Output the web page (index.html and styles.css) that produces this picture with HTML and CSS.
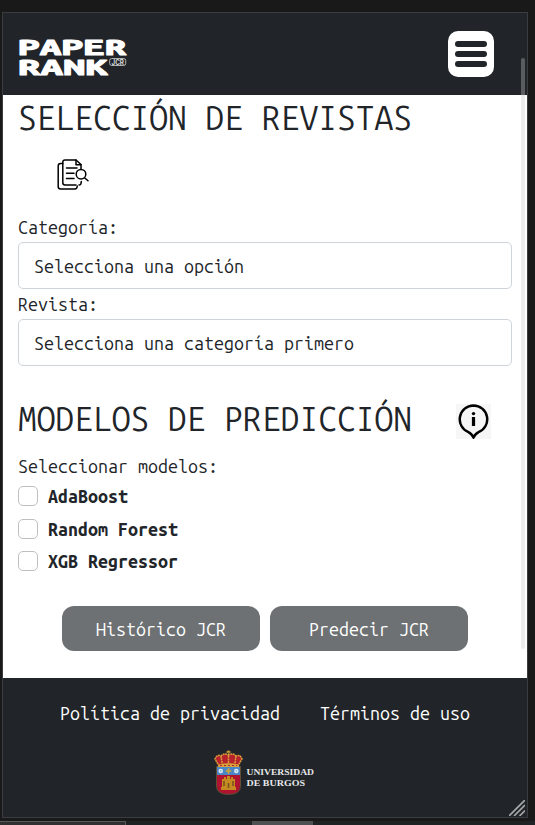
FILE: index.html
```html
<!DOCTYPE html>
<html lang="es">
<head>
<meta charset="utf-8">
<title>PaperRank JCR</title>
<link rel="stylesheet" href="styles.css">
</head>
<body>
<div class="device">
  <header class="header">
    <svg class="logo" viewBox="0 0 110 42">
      <g class="logo-type">
        <text x="0" y="17.8" textLength="108.5" lengthAdjust="spacingAndGlyphs">PAPER</text>
        <text x="0" y="38" textLength="90" lengthAdjust="spacingAndGlyphs">RANK</text>
      </g>
      <rect x="91.7" y="21.5" width="16" height="7" rx="2" fill="none" stroke="#d5d7d8" stroke-width=".8"/>
      <text class="logo-jcr" x="93.5" y="27.5" textLength="12.5" lengthAdjust="spacingAndGlyphs">JCR</text>
    </svg>
    <button class="menu" aria-label="Menú"><i></i><i></i><i></i></button>
  </header>
  <main class="main">
    <h1 class="title">SELECCIÓN DE REVISTAS</h1>
    <svg class="docs" viewBox="0 0 34 34" fill="none" stroke="#000" stroke-width="1.5" stroke-linejoin="round" stroke-linecap="round">
      <path d="M24 11V6.5L19 2H8Q5.8 2 5.8 4.2V24.8Q5.8 27 8 27H19M22 27Q24.3 27 24.3 23.5"/>
      <path d="M19 2V6.8H24M5.8 5.5H3.6Q1.2 5.5 1.2 8V28.5Q1.2 31 3.6 31H18Q20 31 20.3 28"/>
      <path d="M9.5 10H20M9.5 15.3H17M9.5 20.5H17"/>
      <circle cx="24" cy="16.2" r="4.8"/><path d="M27.5 19.7L31 22.8"/>
    </svg>
    <label class="label">Categoría:</label>
    <div class="select">Selecciona una opción</div>
    <label class="label">Revista:</label>
    <div class="select">Selecciona una categoría primero</div>
    <div class="models-head">
      <h1 class="title">MODELOS DE PREDICCIÓN</h1>
      <svg class="info" viewBox="0 0 35 35">
        <path d="M17.5 1.4A13.9 13.9 0 0 1 22.5 28.2Q20 29 17.5 33.4Q15 29 12.5 28.2A13.9 13.9 0 0 1 17.5 1.4Z" fill="none" stroke="#000" stroke-width="2.5"/>
        <circle cx="17.5" cy="9.6" r="1.7"/><path d="M17.5 13V22" stroke="#000" stroke-width="3.2"/>
      </svg>
    </div>
    <p class="label models-label">Seleccionar modelos:</p>
    <div class="checks">
      <label class="check"><span class="box"></span>AdaBoost</label>
      <label class="check"><span class="box"></span>Random Forest</label>
      <label class="check"><span class="box"></span>XGB Regressor</label>
    </div>
    <div class="actions">
      <button class="btn">Histórico JCR</button>
      <button class="btn">Predecir JCR</button>
    </div>
  </main>
  <footer class="footer">
    <nav class="links"><a>Política de privacidad</a><a>Términos de uso</a></nav>
    <svg class="ubu" viewBox="0 0 104 46">
      <path d="M4 17H27V36Q27 44 15.5 44Q4 44 4 36Z" fill="#b01330"/>
      <path d="M4 17H27V25H4Z" fill="#4a86c5"/>
      <path d="M3.5 16.5H27.5V36Q27.5 44.4 15.5 44.4Q3.5 44.4 3.5 36Z" fill="none" stroke="#8e6b3a" stroke-width=".6"/>
      <path d="M5 16L2 8Q4 4 8 6Q11 2.5 15.5 5Q20 2.5 23 6Q27 4 29 8L26 16Q15.5 13.5 5 16Z" fill="#b5222b"/>
      <path d="M5 14.5Q15.5 12 26 14.5V17H5Z" fill="#d9a13a"/>
      <path d="M5 14L2 9Q4 4 8 6Q11 2.5 15.5 5Q20 2.5 23 6Q27 4 29 9L26 14M9 13L8 6M22 13L23 6M15.5 13V0M13.5 2H17.5" fill="none" stroke="#d9a13a" stroke-width="1.5" stroke-dasharray="2 .6"/>
      <path d="M7 15.5H24" stroke="#a52730" stroke-dasharray="2 2"/>
      <circle cx="7.7" cy="21" r="2.3" fill="#dce8f2"/><circle cx="23.3" cy="21" r="2.3" fill="#dce8f2"/>
      <circle cx="7.7" cy="21" r=".8" fill="#7aa4c8"/><circle cx="23.3" cy="21" r=".8" fill="#7aa4c8"/>
      <path d="M15.5 18.2V23.8M12.7 21H18.3" stroke="#cfa636" stroke-width="1.7"/>
      <path d="M8 40V37H9V29H11V27H13V29H14V26H17V29H18V27H20V29H22V37H23V40Z" fill="#c58a20"/>
      <path d="M15.5 33V38M11 31V36M20 31V36" stroke="#76501f" stroke-width="1.5"/>
      <text x="33.5" y="25" textLength="67.5" lengthAdjust="spacingAndGlyphs">UNIVERSIDAD</text>
      <text x="33.5" y="36.3" textLength="58.5" lengthAdjust="spacingAndGlyphs">DE BURGOS</text>
    </svg>
  </footer>
  <div class="scrollbar"></div>
  <svg class="grip" viewBox="0 0 16 16" stroke="#a3a7a5" stroke-width="1.7"><path d="M0 16L16 0M5 16L16 5M10.5 16L16 10.5"/></svg>
</div>
<div class="dock"><span class="dock-tab"></span><span class="dock-thumb"></span></div>
</body>
</html>
```
FILE: styles.css
```css
* { box-sizing: border-box; }
body {
  margin: 0;
  height: 825px;
  padding: 12px 0 0 2px;
  overflow: hidden;
  background: #19191a;
  color: #212529;
  font: 17.87px/22px "Ubuntu Mono", "DejaVu Sans Mono", monospace;
  display: flex;
  flex-direction: column;
}
.device {
  position: relative;
  width: 526px;
  height: 806px;
  border: 1px solid #3b3c40;
  background: #fff;
  display: flex;
  flex-direction: column;
}
.header {
  height: 82px;
  background: #212529;
  display: flex;
  align-items: center;
  justify-content: space-between;
  padding: 0 33px 0 15px;
}
.logo { width: 110px; height: 42px; margin-top: 7px; overflow: visible; }
.logo-type {
  font: 700 22.5px "Ubuntu Mono", "DejaVu Sans Mono", monospace;
  fill: #fff;
  stroke: #fff;
  stroke-width: 1;
  stroke-linejoin: round;
}
.logo-jcr { font: 700 7px Inter, sans-serif; fill: #d5d7d8; }
.menu {
  width: 46px;
  height: 46px;
  padding: 0 7px;
  border: 0;
  border-radius: 10px;
  background: #fff;
  display: flex;
  flex-direction: column;
  justify-content: center;
  gap: 4px;
}
.menu i { height: 6px; border-radius: 3px; background: #212529; }
.main {
  height: 583px;
  padding: 0 15px;
  display: flex;
  flex-direction: column;
}
.title {
  margin: 0;
  font-size: 33.5px;
  font-weight: 400;
  line-height: 46px;
  white-space: nowrap;
}
.docs { width: 34px; height: 34px; margin: 17px 0 24px 39px; flex: none; }
.label { display: block; height: 24px; margin: 0; }
.select {
  height: 47px;
  margin: 2px 0 4px;
  padding: 0 15px;
  border: 1px solid #ced4da;
  border-radius: 5px;
  width: 494px;
  line-height: 46px;
}
.models-head { display: flex; align-items: center; gap: 44px; margin-top: 25px; height: 47px; }
.info { width: 35px; height: 35px; background: #f6f6f6; margin-top: 5px; flex: none; }
.models-label { margin-top: 13px; }
.checks { display: flex; flex-direction: column; gap: 8.5px; margin-top: 6px; }
.check { display: flex; align-items: center; gap: 10px; font-weight: 700; height: 24px; padding-bottom: 2px; }
.box { width: 20px; height: 20px; border: 1px solid #bfbfbf; border-radius: 5px; }
.actions { display: flex; gap: 10px; margin: 32px 0 0 44px; }
.btn {
  width: 198px;
  height: 45px;
  border: 0;
  border-radius: 12px;
  background: #6d7173;
  color: #fff;
  font: inherit;
  padding: 1px 0 0;
}
.footer {
  flex: 1;
  background: #212529;
  color: #fff;
  display: flex;
  flex-direction: column;
  align-items: center;
  padding-top: 24px;
}
.links { display: flex; gap: 40px; }
.ubu { width: 104px; height: 46px; margin-top: 26px; }
.ubu text { font: 700 9px "Liberation Serif", serif; fill: #e6e7e8; }
.scrollbar {
  position: absolute;
  right: 2px;
  top: 45px;
  width: 4px;
  height: 591px;
  border-radius: 2px;
  background: linear-gradient(#5a5d60 37px, #ededed 37px);
}
.grip { position: absolute; right: 2px; bottom: 1px; width: 16px; height: 16px; }
.dock { display: flex; gap: 126px; margin: 3px 0 0 -2px; height: 4px; background: #202324; }
.dock-tab { width: 126px; border-top: 1px solid #59595a; border-right: 1px solid #59595a; background: #303030; }
.dock-thumb { width: 61px; background: #4f5051; }
```
